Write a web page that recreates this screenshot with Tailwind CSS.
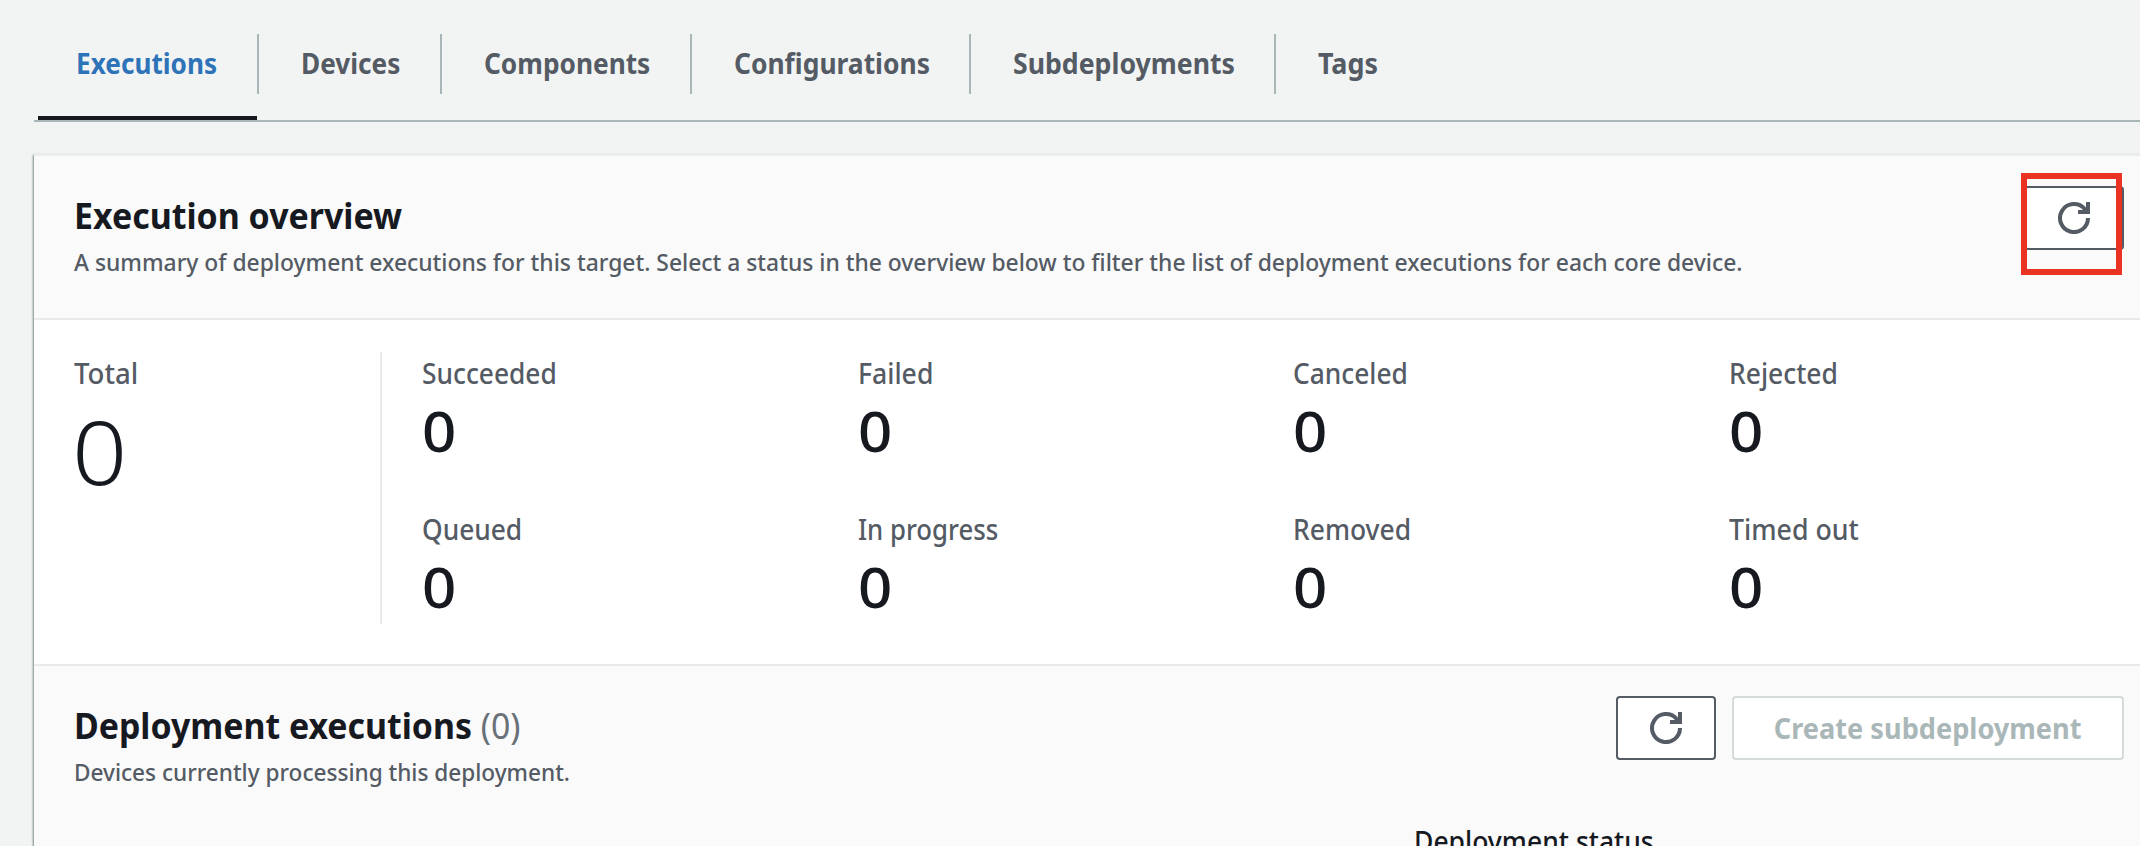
<!DOCTYPE html>
<html lang="en">
<head>
<meta charset="utf-8">
<title>Executions</title>
<script src="https://cdn.jsdelivr.net/npm/@tailwindcss/browser@4"></script>
</head>
<body class="h-[846px] overflow-hidden bg-[#f2f4f3] font-['Noto_Sans',sans-serif] text-[#16191f]">
<nav class="ml-[34px] flex h-[122px] border-b-2 border-[#aab7b8] pt-[34px] pl-1 text-[28px] leading-[59px] font-bold whitespace-nowrap text-[#545b64]">
  <a class="h-[86px] w-[219px] border-b-4 border-[#16191f] pl-[38px] text-[#2e73b8]"><span class="inline-block origin-left scale-x-[0.935]">Executions</span></a>
  <a class="h-[60px] w-[183px] border-l-2 border-[#aab7b8] pl-[42px]"><span class="inline-block origin-left scale-x-[0.935]">Devices</span></a>
  <a class="h-[60px] w-[250px] border-l-2 border-[#aab7b8] pl-[42px]"><span class="inline-block origin-left scale-x-[0.938]">Components</span></a>
  <a class="h-[60px] w-[279px] border-l-2 border-[#aab7b8] pl-[42px]"><span class="inline-block origin-left scale-x-[0.943]">Configurations</span></a>
  <a class="h-[60px] w-[305px] border-l-2 border-[#aab7b8] pl-[42px]"><span class="inline-block origin-left scale-x-[0.952]">Subdeployments</span></a>
  <a class="h-[60px] border-l-2 border-[#aab7b8] pl-[42px]"><span class="inline-block origin-left scale-x-[0.96]">Tags</span></a>
</nav>

<main class="mt-8 ml-[34px] h-[692px] border-t-2 border-[#eaeded] bg-white shadow-[-1px_1px_2px_0_rgba(0,28,36,0.5)]">
  <header class="flex h-[164px] justify-between border-b-2 border-[#eaeaea] bg-[#fafafa] pt-[30px] pr-4 pl-10 whitespace-nowrap">
    <div class="pt-2">
      <h2 class="text-[36px] leading-[44px] font-bold"><span class="inline-block origin-left scale-x-[0.942]">Execution overview</span></h2>
      <p class="text-[24px] leading-[48px] font-medium text-[#545b64]"><span class="inline-block origin-left scale-x-[0.952]">A summary of deployment executions for this target. Select a status in the overview below to filter the list of deployment executions for each core device.</span></p>
    </div>
    <div class="relative h-16">
      <button class="flex h-16 w-[100px] items-center justify-center rounded-[4px] border-2 border-[#545b64] bg-white text-[#545b64]">
        <svg class="size-8" viewBox="0 0 32 32" fill="none" stroke="currentColor" stroke-width="4"><path d="M30 16A14 14 0 1 1 26.5 6.8L29.5 10"/><path d="M20 10H30V0"/></svg>
      </button>
      <div class="absolute -top-[13px] -left-[3px] h-[102px] w-[101px] border-[6px] border-[#eb3323]"></div>
    </div>
  </header>

  <section class="flex h-[346px] border-b-2 border-[#eaeaea] pt-8 pb-10 pl-10 text-[28px] leading-10 font-medium whitespace-nowrap text-[#545b64]">
    <div class="w-[306px] shrink-0 pt-px">
      <div><span class="inline-block origin-left scale-x-[0.985]">Total</span></div>
      <div class="mt-3.5 -ml-[2px] text-[88px] leading-[88px] font-light text-[#16191f]"><span class="inline-block origin-left scale-x-[1.1]">0</span></div>
    </div>
    <div class="grid shrink-0 auto-rows-[156px] grid-cols-[repeat(4,435.5px)] border-l-2 border-[#eaeaea] pt-px pl-10">
      <div><div><span class="inline-block origin-left scale-x-[0.94]">Succeeded</span></div><div class="mt-[9px] text-[56px] leading-[56px] text-[#16191f]"><span class="inline-block origin-left scale-x-[1.07]">0</span></div></div>
      <div><div><span class="inline-block origin-left scale-x-[0.95]">Failed</span></div><div class="mt-[9px] text-[56px] leading-[56px] text-[#16191f]"><span class="inline-block origin-left scale-x-[1.07]">0</span></div></div>
      <div><div><span class="inline-block origin-left scale-x-[0.94]">Canceled</span></div><div class="mt-[9px] text-[56px] leading-[56px] text-[#16191f]"><span class="inline-block origin-left scale-x-[1.07]">0</span></div></div>
      <div><div><span class="inline-block origin-left scale-x-[0.945]">Rejected</span></div><div class="mt-[9px] text-[56px] leading-[56px] text-[#16191f]"><span class="inline-block origin-left scale-x-[1.07]">0</span></div></div>
      <div><div><span class="inline-block origin-left scale-x-[0.94]">Queued</span></div><div class="mt-[9px] text-[56px] leading-[56px] text-[#16191f]"><span class="inline-block origin-left scale-x-[1.07]">0</span></div></div>
      <div><div><span class="inline-block origin-left scale-x-[0.92]">In progress</span></div><div class="mt-[9px] text-[56px] leading-[56px] text-[#16191f]"><span class="inline-block origin-left scale-x-[1.07]">0</span></div></div>
      <div><div><span class="inline-block origin-left scale-x-[0.945]">Removed</span></div><div class="mt-[9px] text-[56px] leading-[56px] text-[#16191f]"><span class="inline-block origin-left scale-x-[1.07]">0</span></div></div>
      <div><div><span class="inline-block origin-left scale-x-[0.955]">Timed out</span></div><div class="mt-[9px] text-[56px] leading-[56px] text-[#16191f]"><span class="inline-block origin-left scale-x-[1.07]">0</span></div></div>
    </div>
  </section>

  <section class="h-[180px] bg-[#fafafa] whitespace-nowrap">
    <div class="flex h-[130px] justify-between pt-[30px] pr-4 pl-10">
      <div class="pt-2">
        <h2 class="text-[36px] leading-[44px] font-bold"><span class="inline-block origin-left scale-x-[0.94]">Deployment executions <span class="font-normal text-[#687078]">(0)</span></span></h2>
        <p class="text-[24px] leading-[48px] font-medium text-[#545b64]"><span class="inline-block origin-left scale-x-[0.941]">Devices currently processing this deployment.</span></p>
      </div>
      <div class="flex gap-4">
        <button class="flex h-16 w-[100px] items-center justify-center rounded-[4px] border-2 border-[#545b64] bg-white text-[#545b64]">
          <svg class="size-8" viewBox="0 0 32 32" fill="none" stroke="currentColor" stroke-width="4"><path d="M30 16A14 14 0 1 1 26.5 6.8L29.5 10"/><path d="M20 10H30V0"/></svg>
        </button>
        <button class="h-16 w-[392px] rounded-[4px] border-2 border-[#d5dbdb] bg-white text-[28px] font-bold text-[#aab7b8]"><span class="inline-block scale-x-[0.97]">Create subdeployment</span></button>
      </div>
    </div>
    <div class="mt-[25px] ml-[1380px] text-[28px] leading-10 font-medium"><span class="inline-block origin-left scale-x-[0.947]">Deployment status</span></div>
  </section>
</main>
</body>
</html>
